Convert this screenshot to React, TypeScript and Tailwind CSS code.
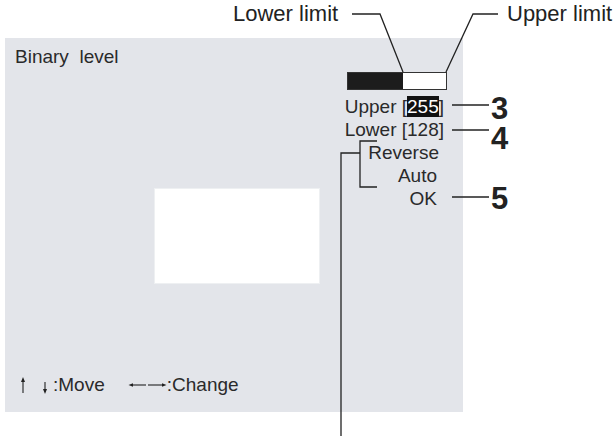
import React from "react";

function UpArrow() {
  return (
    <svg width="8" height="23" viewBox="0 0 8 23" className="block">
      <line x1="4" y1="7" x2="4" y2="20" stroke="#222" strokeWidth="1.1" />
      <polygon points="4,4 2,9 6,9" fill="#222" />
    </svg>
  );
}

function DownArrow() {
  return (
    <svg width="6" height="23" viewBox="0 0 6 23" className="block">
      <line x1="3" y1="9" x2="3" y2="17" stroke="#222" strokeWidth="1.1" />
      <polygon points="3,21 1,16 5,16" fill="#222" />
    </svg>
  );
}

function LeftRightArrow() {
  return (
    <svg width="39" height="23" viewBox="0 0 39 23" className="block">
      <line x1="3" y1="12" x2="18" y2="12" stroke="#222" strokeWidth="1.1" />
      <polygon points="0.5,12 5,10.2 5,13.8" fill="#222" />
      <line x1="20" y1="12" x2="35" y2="12" stroke="#222" strokeWidth="1.1" />
      <polygon points="38.5,12 34,10.2 34,13.8" fill="#222" />
    </svg>
  );
}

export default function App() {
  return (
    <div className="relative w-[615px] h-[436px] bg-white overflow-hidden font-['Liberation_Sans',Arial,sans-serif] text-[#222]">
      {/* Top callout labels */}
      <div className="h-[38px] flex items-start pl-[233px] pt-[1px] text-[22px] leading-[26px]">
        <span className="w-[274px]">Lower limit</span>
        <span>Upper limit</span>
      </div>

      {/* Screen panel */}
      <div className="ml-[5px] w-[458px] h-[374px] bg-[#e3e5ea] flex text-[19px] leading-[23px] text-[#2a2a2a]">
        {/* Left column */}
        <div className="flex flex-col w-[330px] pl-[10px] pt-[7px]">
          <div className="whitespace-pre">Binary  level</div>
          <div className="ml-[139px] mt-[120px] w-[166px] h-[96px] bg-white border border-[#eef0f2]" />
          <div className="mt-auto mb-[16px] flex items-start">
            <span className="ml-[4px]">
              <UpArrow />
            </span>
            <span className="ml-[15px]">
              <DownArrow />
            </span>
            <span className="ml-[5px]">:Move</span>
            <span className="ml-[23px]">
              <LeftRightArrow />
            </span>
            <span>:Change</span>
          </div>
        </div>

        {/* Right column: bar + menu */}
        <div className="flex-1 flex flex-col items-end pr-[16px] pt-[34px]">
          <div className="w-[100px] h-[18px] border-[1.5px] border-[#333] bg-white flex">
            <div className="w-[55px] h-full bg-[#1c1c1c]" />
          </div>
          <div className="mt-[5px] mr-[3px]">
            Upper [<span className="bg-[#111] text-white">255</span>]
          </div>
          <div className="mr-[3px]">Lower [128]</div>
          <div className="mr-[8px]">Reverse</div>
          <div className="mr-[10px]">Auto</div>
          <div className="mr-[10px]">OK</div>
        </div>
      </div>

      {/* Callout numbers */}
      <div className="absolute left-[491px] top-[94px] text-[31px] leading-[30px] font-bold text-[#222] whitespace-pre-line">
        {"3\n4"}
      </div>
      <div className="absolute left-[491px] top-[184px] text-[31px] leading-[30px] font-bold text-[#222]">5</div>

      {/* Leader lines */}
      <svg
        className="absolute inset-0 pointer-events-none"
        width="615"
        height="436"
        viewBox="0 0 615 436"
      >
        <g stroke="#222" strokeWidth="1.3" fill="none">
          <polyline points="352,14 380,14 403,72" />
          <polyline points="446,72 473,14 498,14" />
          <line x1="452" y1="105" x2="489" y2="105" />
          <line x1="452" y1="130" x2="489" y2="130" />
          <line x1="452" y1="197" x2="489" y2="197" />
          <polyline points="377,141 360,141 360,187 377,187" />
          <polyline points="360,153 341,153 341,436" />
        </g>
      </svg>
    </div>
  );
}
